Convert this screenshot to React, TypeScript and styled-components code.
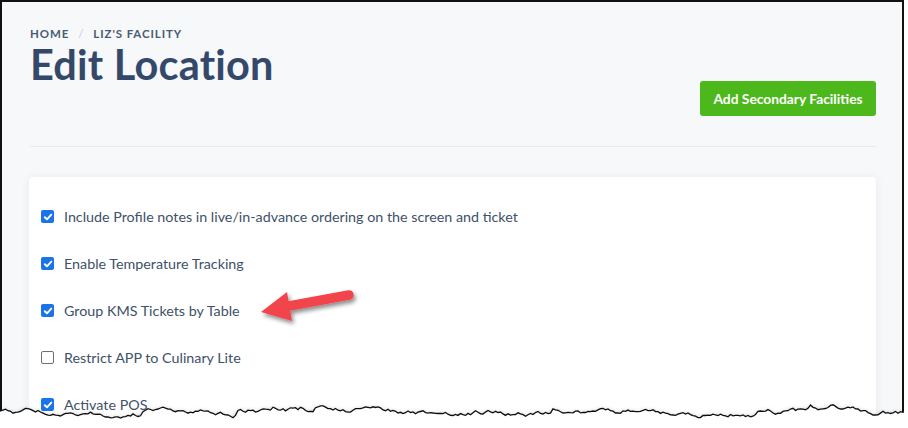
import styled, { createGlobalStyle } from "styled-components";

const GlobalStyle = createGlobalStyle`
  html, body {
    margin: 0;
    padding: 0;
    background: #fff;
  }
  body {
    font-family: "Lato", "Noto Sans", sans-serif;
  }
`;

const Frame = styled.div`
  position: relative;
  width: 904px;
  height: 428px;
  box-sizing: border-box;
  border: 2px solid #111;
  border-bottom: none;
  background: #f7f8fa;
  overflow: hidden;
`;

const Content = styled.div`
  margin-left: 27px;
  width: 847px;
  display: flex;
  flex-direction: column;
`;

const Header = styled.div`
  display: flex;
  justify-content: space-between;
  align-items: flex-start;
  padding-top: 25px;
`;

const TitleBlock = styled.div`
  display: flex;
  flex-direction: column;
  padding-left: 1px;
`;

const Crumbs = styled.div`
  display: flex;
  gap: 9px;
  font-size: 11.5px;
  font-weight: 700;
  letter-spacing: 0.9px;
  color: #4a5b72;
  line-height: 14px;
`;

const Sep = styled.span`
  color: #c6ccd4;
  font-weight: 400;
`;

const Title = styled.h1`
  margin: 0;
  font-size: 41.5px;
  line-height: 46px;
  font-weight: 700;
  color: #34496a;
  letter-spacing: 0.2px;
`;

const GreenButton = styled.button`
  margin-top: 54px;
  height: 35px;
  width: 176px;
  border: none;
  border-radius: 3px;
  background: #4cb81c;
  color: #fff;
  font-family: "Lato", sans-serif;
  font-weight: 700;
  font-size: 13.8px;
`;

const Divider = styled.hr`
  margin: 30px 0 0 1px;
  border: none;
  border-top: 1px solid #e6e9ee;
`;

const Card = styled.div`
  margin-top: 30px;
  background: #fff;
  border-radius: 4px;
  box-shadow: 0 1px 10px rgba(30, 45, 70, 0.07);
  padding: 16px 12px 40px;
  display: flex;
  flex-direction: column;
`;

const Row = styled.label`
  display: flex;
  align-items: center;
  gap: 10px;
  height: 47px;
  font-size: 14.3px;
  color: #405169;
`;

const Box = styled.span<{ $on: boolean }>`
  width: 13px;
  height: 13px;
  box-sizing: border-box;
  border-radius: 2px;
  display: flex;
  align-items: center;
  justify-content: center;
  background: ${(p) => (p.$on ? "#1a73e8" : "#fff")};
  border: ${(p) => (p.$on ? "none" : "1px solid #6b6f76")};
  flex: none;
`;

const Overlay = styled.svg`
  position: absolute;
  left: 0;
  top: 0;
  pointer-events: none;
`;

const rows = [
  { label: "Include Profile notes in live/in-advance ordering on the screen and ticket", on: true },
  { label: "Enable Temperature Tracking", on: true },
  { label: "Group KMS Tickets by Table", on: true },
  { label: "Restrict APP to Culinary Lite", on: false },
  { label: "Activate POS", on: true },
];

function Check() {
  return (
    <svg width="10" height="10" viewBox="0 0 10 10">
      <path d="M1.8 5.2 L4 7.3 L8.3 2.6" fill="none" stroke="#fff" strokeWidth="1.9" strokeLinecap="round" strokeLinejoin="round" />
    </svg>
  );
}

function tornPath() {
  let seed = 11;
  const rnd = () => {
    seed = (seed * 9301 + 49297) % 233280;
    return seed / 233280;
  };
  const pts: string[] = [];
  let y = 411;
  for (let x = -2; x <= 910; x += 2.5) {
    y += (rnd() - 0.5) * 4.2;
    y += (412.5 - y) * 0.1;
    if (rnd() > 0.93) y -= 3;
    if (y < 404) y = 404;
    if (y > 419) y = 419;
    pts.push(`${x},${y.toFixed(1)}`);
  }
  return pts;
}

const torn = tornPath();

export default function App() {
  return (
    <>
      <GlobalStyle />
      <Frame>
        <Content>
          <Header>
            <TitleBlock>
              <Crumbs>
                <span>HOME</span>
                <Sep>/</Sep>
                <span>LIZ'S FACILITY</span>
              </Crumbs>
              <Title>Edit Location</Title>
            </TitleBlock>
            <GreenButton>Add Secondary Facilities</GreenButton>
          </Header>
          <Divider />
          <Card>
            {rows.map((r) => (
              <Row key={r.label}>
                <Box $on={r.on}>{r.on && <Check />}</Box>
                {r.label}
              </Row>
            ))}
          </Card>
        </Content>
      </Frame>
      <Overlay width="908" height="428" viewBox="0 0 908 428">
        <defs>
          <filter id="arrowShadow" x="-20%" y="-40%" width="140%" height="180%">
            <feDropShadow dx="2" dy="3" stdDeviation="2.2" floodColor="#000" floodOpacity="0.45" />
          </filter>
          <filter id="tornShadow" x="-5%" y="-50%" width="110%" height="200%">
            <feDropShadow dx="0" dy="2" stdDeviation="2.5" floodColor="#000" floodOpacity="0.35" />
          </filter>
        </defs>
        <g filter="url(#arrowShadow)">
          <line x1="289" y1="306" x2="349" y2="295" stroke="#f2454b" strokeWidth="9.5" strokeLinecap="round" />
          <polygon points="261,312 287,292 292,321" fill="#f2454b" />
        </g>
        <polygon
          points={`-2,440 ${torn.join(" ")} 910,440`}
          fill="#fff"
          stroke="#111"
          strokeWidth="1.3"
          filter="url(#tornShadow)"
        />
        <rect x="904" y="0" width="4" height="428" fill="#fff" />
      </Overlay>
    </>
  );
}
